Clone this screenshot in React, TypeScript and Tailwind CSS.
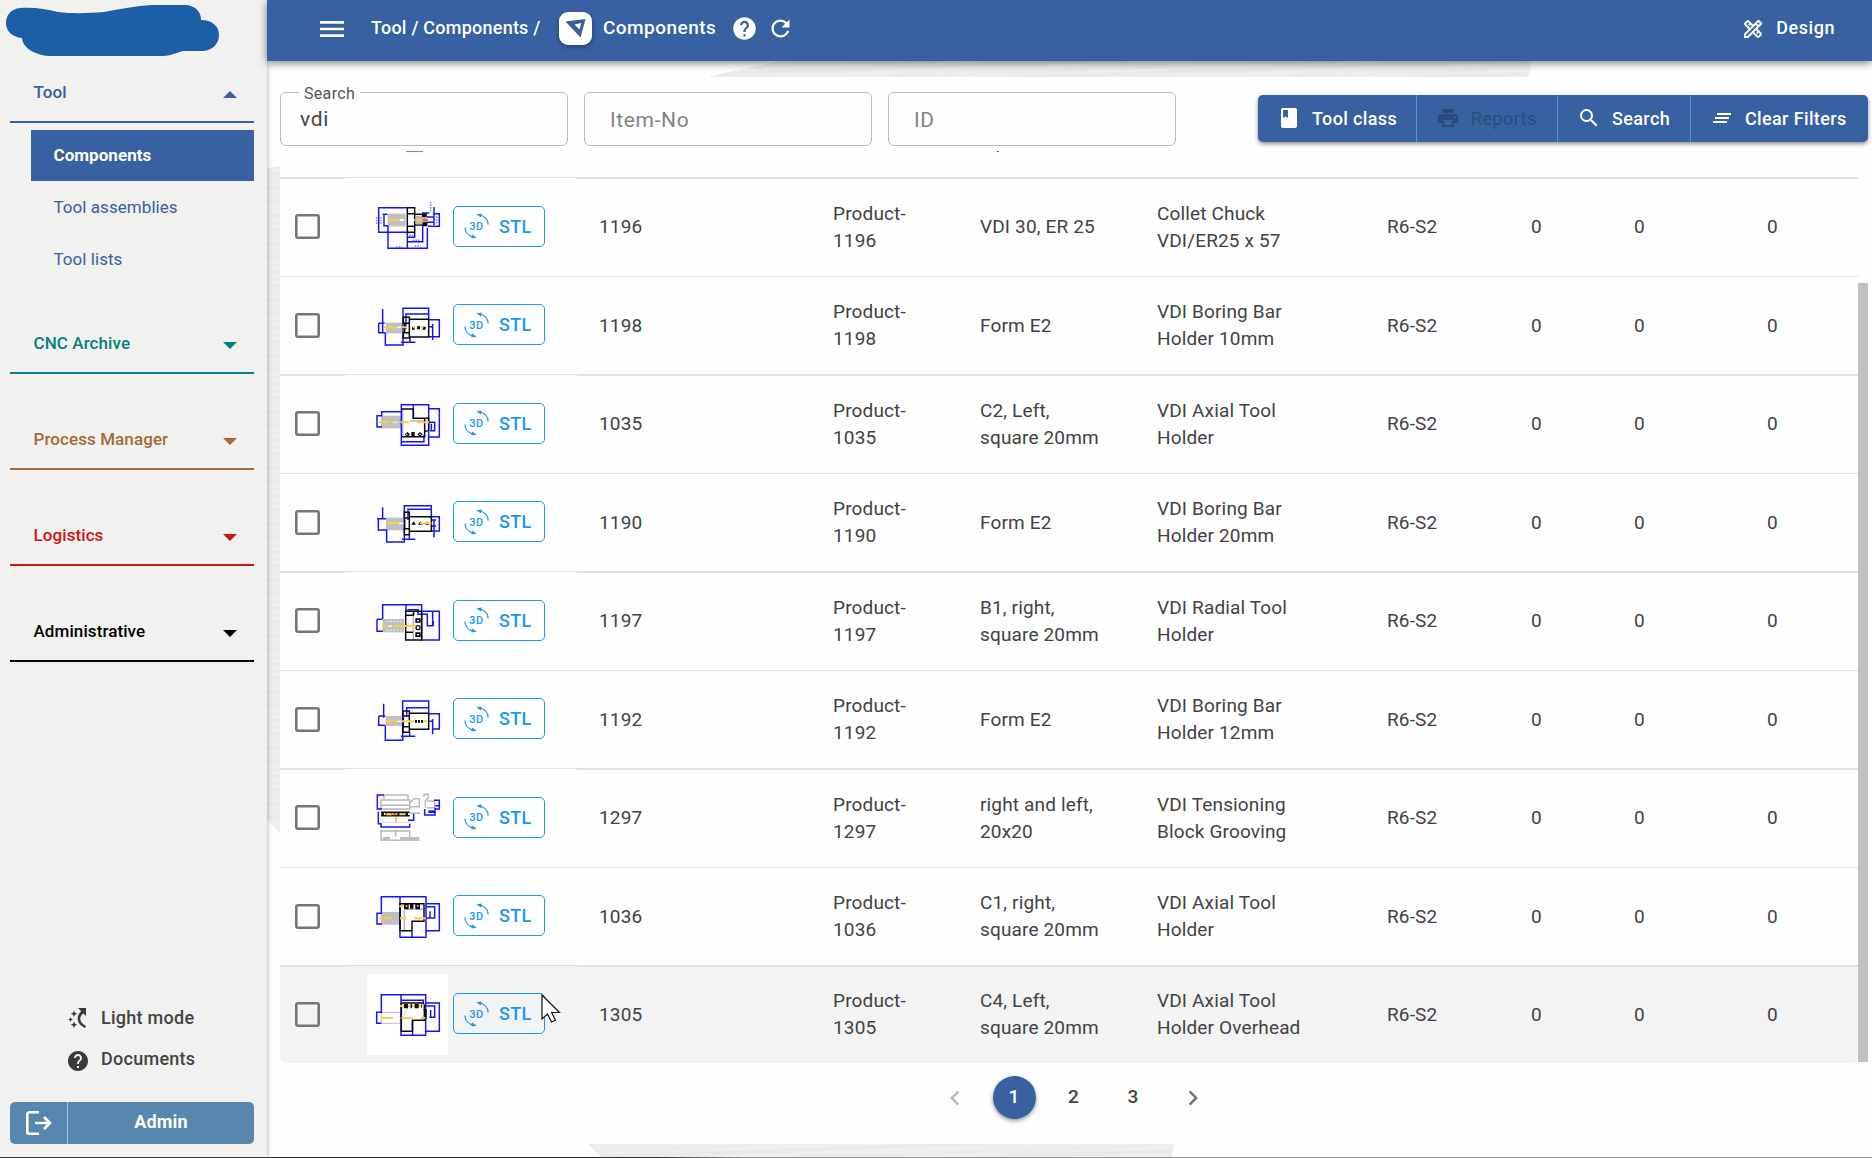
import type { ReactNode } from "react";
import {
  MdMenu,
  MdHelp,
  MdRefresh,
  MdOutlineDesignServices,
  MdBook,
  MdPrint,
  MdSearch,
  MdClearAll,
  MdChevronLeft,
  MdChevronRight,
} from "react-icons/md";

type Row = { id: string; form: ReactNode; desc: ReactNode; box: string; art: ReactNode };

const B = (p: { d: string }) => <path d={p.d} stroke="#1414f5" strokeWidth="4.4" />;
const K = (p: { d: string }) => <path d={p.d} stroke="#0a0a0a" strokeWidth="4.4" />;
const Y = (p: { d: string }) => <path d={p.d} stroke="#fbcf45" strokeWidth="6" />;
const G = (p: { d: string }) => <path d={p.d} fill="#c0c0c0" />;
const S = (p: { d: string }) => <path d={p.d} stroke="#b8b8b8" strokeWidth="4.4" />;
const D = (p: { d: string }) => <path d={p.d} fill="#0a0a0a" />;

const rows: Row[] = [
  {
    id: "1196",
    form: "VDI 30, ER 25",
    desc: <>Collet Chuck<br />VDI/ER25 x 57</>,
    box: "21 18 243 243",
    art: (
      <>
        <G d="M83 98h54v38H83z" />
        <path d="M50 108v22M62 108v20M230 106v22M148 163h12M158 178h22M108 198h18M164 195h18M212 62v32" stroke="#8a8af5" strokeWidth="5" strokeDasharray="5 3" />
        <B d="M142 80H56v74h84M68 100h14M72 100v34h12M84 134v68h58M142 152v50h58M142 182h46V130M202 140v64M164 155v14h-20M222 78v54M200 108h22M200 124h22M222 98h16v38h-34M186 96h22" />
        <K d="M142 80h22v18h-22zM142 136h22v18h-22zM166 100h34M166 132h34M142 98v38M164 98v38" />
        <path d="M168 104h32v26h-32z" fill="#bbb" />
        <D d="M186 98h14v10h-14zM188 124h14v12h-14z" />
        <Y d="M83 117h34M170 117h16" />
        <path d="M188 117h16" stroke="#e8772e" strokeWidth="8" />
        <path d="M120 117h12M144 117h20" stroke="#fff" strokeWidth="6" />
      </>
    ),
  },
  {
    id: "1198",
    form: "Form E2",
    desc: <>VDI Boring Bar<br />Holder 10mm</>,
    box: "21 315 243 243",
    art: (
      <>
        <G d="M77 428h50v32H77z" />
        <B d="M68 387v72M56 430v28h20M56 430h18M76 458v37h53V385h77v35M138 440v-38h68M206 419h32v51h-32M218 432v48M206 440h14M150 470v18M123 487h43" />
        <K d="M148 418h58v53h-58zM130 412h18v18h-18zM130 458h18v16h-18zM134 430v30" />
        <D d="M156 440h8v9h-8zM171 439h9v9h-9zM188 440h9v9h-9zM128 440h12v6h-12z" />
        <Y d="M72 442h38M125 442h16M158 442h6M182 442h8" />
        <path d="M112 442h10" stroke="#fff" strokeWidth="5" />
      </>
    ),
  },
  {
    id: "1035",
    form: <>C2, Left,<br />square 20mm</>,
    desc: <>VDI Axial Tool<br />Holder</>,
    box: "21 9 243 243",
    art: (
      <>
        <G d="M63 104h60v38H63z" />
        <S d="M128 86v80M150 120h50" />
        <B d="M66 138H51v-34h14V92h59V71h82v42M124 92v101h82V83h32v85h-32M160 71v40M206 124h18v25h-14M214 128v18M124 182h68v-20" />
        <K d="M124 84h36v28h34v55h-70M194 112h12v36l-12 4M206 120v30" />
        <D d="M134 160l8-7 8 7-8 8zM154 153h10v14h-10zM172 160l8-7 8 7-8 8z" />
        <path d="M138 160h4M178 160h4" stroke="#fff" strokeWidth="4" />
        <Y d="M57 124h34M122 124h24M171 124h36" />
        <path d="M100 124h16" stroke="#fff" strokeWidth="4" strokeDasharray="5 3" />
      </>
    ),
  },
  {
    id: "1190",
    form: "Form E2",
    desc: <>VDI Boring Bar<br />Holder 20mm</>,
    box: "21 306 243 243",
    art: (
      <>
        <G d="M78 413h55v38H78z" />
        <B d="M68 382v34M78 416H55v34h25v36h53V377h81v34M144 420v-32h70M51 416h10M206 410h32v43h-24M222 422v50M214 420h14M214 438h14M148 462v18M126 478h40" />
        <K d="M148 410h66v44h-66zM133 397h15v17h-15zM133 446h15v18h-15zM134 418v26" />
        <D d="M154 434l7-10 7 10zM174 434l7-10 7 10zM194 434l7-10 7 10z" />
        <Y d="M77 429h36M180 430h34" />
        <path d="M116 430h14" stroke="#fff" strokeWidth="4" />
      </>
    ),
  },
  {
    id: "1197",
    form: <>B1, right,<br />square 20mm</>,
    desc: <>VDI Radial Tool<br />Holder</>,
    box: "21 0 243 243",
    art: (
      <>
        <G d="M68 114h64v40H68z" />
        <path d="M80 121h44M80 148h44" stroke="#eee" strokeWidth="4" strokeDasharray="5 5" />
        <S d="M160 90v88" />
        <B d="M68 114V71h117v106h53V91h-50M138 71v21M51 115h16M51 115v36h18M142 86h32v14h28v34h16V92M220 120v14" />
        <K d="M137 91h48v86h-48zM137 103h24M161 91v12M137 154h22M137 154v22" />
        <D d="M166 112h16v13h-16zM166 154h16v14h-16z" />
        <circle cx="174" cy="140" r="6" stroke="#111" strokeWidth="4" />
        <path d="M171 119h6M171 161h6" stroke="#fff" strokeWidth="4" />
        <Y d="M66 135h12M100 135h68" />
        <path d="M84 135h12" stroke="#fff" strokeWidth="4" />
      </>
    ),
  },
  {
    id: "1192",
    form: "Form E2",
    desc: <>VDI Boring Bar<br />Holder 12mm</>,
    box: "21 297 243 243",
    art: (
      <>
        <G d="M77 408h50v30H77z" />
        <B d="M71 371v42M56 408v28h20M56 408h20M76 438v43h52V363h78v42M140 410v-27h66M206 401h32v46h-22M218 417v46M206 424h14M149 455v14M123 469h43" />
        <K d="M148 400h58v48h-58zM129 393h19v15h-19zM129 440h19v17h-19zM130 412v26" />
        <Y d="M74 424h36M125 424h38M190 424h14" />
        <D d="M165 420h6v8h-6zM174 420h6v8h-6zM183 420h6v8h-6z" />
        <path d="M112 424h12" stroke="#fff" strokeWidth="4" />
      </>
    ),
  },
  {
    id: "1297",
    form: <>right and left,<br />20x20</>,
    desc: <>VDI Tensioning<br />Block Grooving</>,
    box: "21 21 243 243",
    art: (
      <>
        <S d="M72 84V72h72v14M63 87h86v27H63zM63 103h86M150 95l12-12h16v24h-28M150 127h30M192 78v-8h12v12l-8 6v22M200 90h24v20h-24M63 180h86v28H63zM107 176v20M150 208h28" />
        <G d="M68 198h22v12H68zM120 198h58v12h-58z" />
        <path d="M68 140v14h80v-14" stroke="#ccc" strokeWidth="2" />
        <B d="M72 72H52v42h14M55 122v36h8v10h86v-10M144 148h17v-20M194 114v18h31v-22M222 88h16v26h-14M226 104h12" />
        <K d="M63 124h86M63 134h86" />
        <path d="M64 129h84" stroke="#111" strokeWidth="10" strokeDasharray="8 4" />
        <path d="M76 130h34" stroke="#ef8a3a" strokeWidth="5" />
        <Y d="M108 138v18M118 130h16M80 130h14" />
        <path d="M205 122h20" stroke="#1414f0" strokeWidth="8" />
      </>
    ),
  },
  {
    id: "1036",
    form: <>C1, right,<br />square 20mm</>,
    desc: <>VDI Axial Tool<br />Holder</>,
    box: "21 318 243 243",
    art: (
      <>
        <G d="M63 426h57v38H63z" />
        <S d="M133 420v64M140 418h50" />
        <B d="M66 462H51v-32h13v-50h134v122h-78V380M198 401h40v81h-40M198 410h26v34h-26M210 424v20M156 482v20" />
        <K d="M120 401h72v53h-36v28h-36zM192 401v50" />
        <D d="M132 402h14v16h-14zM150 402h10v14h-10zM166 402h14v16h-14z" />
        <path d="M137 408h5M171 408h5" stroke="#fff" strokeWidth="4" />
        <Y d="M57 445h38M120 445h18M163 445h35M118 409h12" />
      </>
    ),
  },
  {
    id: "1305",
    form: <>C4, Left,<br />square 20mm</>,
    desc: <>VDI Axial Tool<br />Holder Overhead</>,
    box: "291 42 243 243",
    art: (
      <>
        <path d="M334 157h57v33h-57z" stroke="#bdbdbd" strokeWidth="3" />
        <path d="M412 145l-14 34" stroke="#ccc" strokeWidth="3" />
        <B d="M334 190h-14v-33h14v-53h133v122h-74V104M394 121h66v12M467 129h41v85h-41M467 138h27v34h-16M482 150v20M428 182v44" />
        <K d="M394 129h66M394 129v85h33v-33h36V133M460 150h8v28" />
        <Y d="M333 174h36M394 174h34M390 138h70M452 174h14" />
        <path d="M402 138h54" stroke="#111" strokeWidth="14" strokeDasharray="12 8 4 8" />
      </>
    ),
  },
];

function StlButton() {
  return (
    <div className="mb-0.5 ml-[5px] flex h-[41px] w-[92px] items-center rounded-[5px] border border-[#2196f3] pl-2.5 text-[18px] font-medium tracking-[0.02em] text-[#2196f3]">
      <svg width="25" height="26" viewBox="0 0 25 26" fill="none" stroke="#2196f3" strokeWidth="1.3">
        <text x="12.4" y="16.800" textAnchor="middle" fontFamily="Roboto, sans-serif" fontSize="11" fontWeight="500" fill="#2196f3" stroke="none">
          3D
        </text>
        <path d="M24.2 11.5C24 6.500 20.500 2.600 15 1.800" />
        <path d="M12.300 1.300l5.400-.9-.8 4.200z" fill="#2196f3" stroke="none" />
        <path d="M.9 14.500C1.100 19.500 4.600 23.400 10 24.200" />
        <path d="M12.800 24.700l-5.400.9.800-4.200z" fill="#2196f3" stroke="none" />
      </svg>
      <span className="ml-[10px]">STL</span>
    </div>
  );
}

function TableRow({ row, index }: { row: Row; index: number }) {
  const thick = index % 2 === 0;
  const last = index === rows.length - 1;
  const cell = `flex items-center ${thick ? "border-t-2 pb-[2px]" : "border-t pb-px"} border-[#e0e0e0]`;
  return (
    <div
      className={`grid grid-cols-[65px_232px_256px_147px_177px_230px_144px_103px_133px_91px] text-[19px] leading-[27px] tracking-[0.008em] text-[#424244] ${
        thick && !last ? "h-[99px]" : "h-[98px]"
      } ${last ? "rounded-b-md bg-[#f3f3f3]" : ""}`}
    >
      <div className={`${cell} pl-[15px]`}>
        <span className="size-[25px] rounded-[3px] border-2 border-[#757575] shadow-[inset_0_0_0_0.6px_#757575]" />
      </div>
      <div className="flex items-center border-t border-[#e0e0e0] pl-[22px]">
        <svg width="81" height="81" viewBox={row.box} fill="none" className={last ? "bg-white" : ""}>
          {row.art}
        </svg>
        <StlButton />
      </div>
      <div className={`${cell} pl-[22px]`}>{row.id}</div>
      <div className={cell}>
        <span>
          Product-
          <br />
          {row.id}
        </span>
      </div>
      <div className={cell}>
        <span>{row.form}</span>
      </div>
      <div className={cell}>
        <span>{row.desc}</span>
      </div>
      <div className={cell}>R6-S2</div>
      <div className={cell}>0</div>
      <div className={cell}>0</div>
      <div className={cell}>0</div>
    </div>
  );
}

function Section({ label, className, up }: { label: string; className: string; up?: boolean }) {
  return (
    <div className={`mr-[13px] ml-[10px] flex h-[62px] items-center justify-between border-b-2 border-current pt-[3px] pr-[17px] pl-[23.5px] text-[17px] font-medium tracking-[0.005em] ${className}`}>
      <span>{label}</span>
      <svg width="14" height="7" viewBox="0 0 14 7" fill="currentColor" className="mt-[3px]">
        <path d={up ? "M0 7L7 0l7 7z" : "M0 0l7 7 7-7z"} />
      </svg>
    </div>
  );
}

function Sidebar() {
  return (
    <aside className="relative z-10 flex w-[267px] shrink-0 flex-col bg-[#f1f1ef] shadow-[1px_0_4px_rgba(0,0,0,0.25)]">
      <svg width="267" height="61" viewBox="0 0 267 61" className="shrink-0">
        <path
          d="M20 8C34 7 46 9 58 12C74 14 90 13 104 12C120 9 136 6 152 5H186C196 6 201 12 201 20C212 20 219 26 219 35C219 44 212 51 202 51H183C175 53 170 56 163 56H49C36 55 23 49 22 38C12 37 6 31 6 23C6 15 11 9 20 8Z"
          fill="#1d5fa6"
        />
      </svg>
      <Section label="Tool" up className="text-[#3761a0]" />
      <nav className="mt-[7px] mr-[13px] ml-[31px] text-[17px] tracking-[0.003em] text-[#3761a0]">
        <div className="flex h-[51px] items-center bg-[#3761a0] pl-[22.5px] font-bold text-white">Components</div>
        <div className="flex h-[52px] items-center pt-px pl-[22.5px]">Tool assemblies</div>
        <div className="flex h-[52px] items-center pt-px pl-[22.5px]">Tool lists</div>
      </nav>
      <div className="mt-[27px] flex flex-col gap-[34px]">
        <Section label="CNC Archive" className="text-[#048080]" />
        <Section label="Process Manager" className="text-[#a5693a]" />
        <Section label="Logistics" className="text-[#cb1515]" />
        <Section label="Administrative" className="text-black" />
      </div>
      <div className="mt-auto text-[18px] font-medium tracking-[0.015em] text-[#424244]">
        <div className="flex h-[41px] items-center pl-[68px]">
          <svg width="20" height="22" viewBox="0 0 20 22" fill="#3a3a3c" className="mr-[13px]">
            <path d="M10 1h8v8l-2.700-2.600C10.800 10 11 15.500 18 19l-1 2C8.500 17 7.500 9.500 13.200 4.200z" />
            <path d="M6 3.500l1 2.200 2.200 1-2.200 1-1 2.200-1-2.200-2.200-1 2.200-1zM6 14.500l1 2.200 2.200 1-2.200 1-1 2.200-1-2.200-2.200-1 2.200-1zM2.500 10l.8 1.700 1.700.8-1.700.8-.8 1.700-.8-1.700L0 12.500l1.700-.8z" />
          </svg>
          Light mode
        </div>
        <div className="flex h-[41px] items-center pl-[66px]">
          <MdHelp className="mt-1 mr-[11px] size-6 text-[#3a3a3c]" />
          Documents
        </div>
      </div>
      <div className="mt-[23px] mr-[13px] mb-3.5 ml-[10px] flex h-[42px] overflow-hidden rounded-[5px] bg-[#5786ae] text-[18px] font-bold tracking-[0.008em] text-white">
        <div className="flex w-[58px] items-center justify-center border-r border-[#90caf9]">
          <svg width="26" height="24" viewBox="0 0 26 24" fill="none" stroke="white" strokeWidth="2.600">
            <path d="M13 1.300H3.300a2 2 0 0 0-2 2v17.400a2 2 0 0 0 2 2H13M9 12h15M18 6l6 6-6 6" />
          </svg>
        </div>
        <div className="flex flex-1 items-center justify-center pb-[3px]">Admin</div>
      </div>
    </aside>
  );
}

function Header() {
  return (
    <header className="relative z-10 flex h-[61px] shrink-0 items-center bg-[#3761a0] pb-1 text-[18px] font-medium tracking-[0.013em] text-white shadow-[0_2px_8px_rgba(0,0,0,0.5)]">
      <MdMenu className="ml-[49px] size-8" />
      <span className="ml-[23px] w-[188px] pb-0.5">Tool / Components /</span>
      <span className="flex size-[33px] items-center justify-center rounded-[9px] bg-white shadow-[0_2px_4px_rgba(0,0,0,0.35)]">
        <svg width="21" height="21" viewBox="0 0 21 21" fillRule="evenodd">
          <path d="M.5 3.500L20.500 1 15.500 19.500zM9.500 6.500l5 5 1.800-6.500z" fill="#3a5f98" />
        </svg>
      </span>
      <span className="ml-[11px] w-[128px] text-[19px] tracking-[0.024em]">Components</span>
      <MdHelp className="size-[27px]" />
      <MdRefresh className="ml-[9px] size-[27px]" />
      <MdOutlineDesignServices className="ml-auto size-6" />
      <span className="mr-[37px] ml-[11px] pb-0.5 tracking-[0.03em]">Design</span>
    </header>
  );
}

function Field({ placeholder, value }: { placeholder: string; value?: string }) {
  return (
    <div className="relative flex h-[54px] w-[288px] items-center rounded-md border border-[#b9b9b9] text-[21px] tracking-[0.03em]">
      {value ? (
        <>
          <span className="absolute -top-[11px] left-[18px] bg-[#fefefe] px-[5px] text-[16px] leading-6 tracking-[0.02em] text-[#555]">{placeholder}</span>
          <span className="pt-[2px] pl-[19px] text-[#444]">{value}</span>
        </>
      ) : (
        <span className="pt-[4px] pl-[25px] text-[#838383]">{placeholder}</span>
      )}
    </div>
  );
}

function Toolbar() {
  const item = "flex items-center pb-px";
  return (
    <div className="flex h-[47px] w-[610px] rounded-[5px] bg-[#3761a0] text-[18px] font-medium tracking-[0.02em] text-white shadow-[0_2px_4px_rgba(0,0,0,0.45)]">
      <div className={`${item} w-[159px] gap-[11px] border-r border-[#4a97e0] pl-[19px]`}>
        <MdBook className="size-6" />
        <span>Tool class</span>
      </div>
      <div className={`${item} w-[141px] gap-[11px] border-r border-[#4a97e0] pl-[19px] font-normal tracking-[0.025em] text-[#2b4a7d]`}>
        <MdPrint className="size-6" />
        <span>Reports</span>
      </div>
      <div className={`${item} w-[133px] gap-[11px] border-r border-[#4a97e0] pl-[19px]`}>
        <MdSearch className="size-6" />
        <span>Search</span>
      </div>
      <div className={`${item} gap-[11px] pl-[19px]`}>
        <MdClearAll className="size-6" />
        <span>Clear Filters</span>
      </div>
    </div>
  );
}

function Pagination() {
  return (
    <div className="mt-[13px] ml-[653px] flex h-[43px] items-center gap-[16.500px] text-[19px] font-medium text-[#424244]">
      <span className="flex size-[43px] items-center justify-center text-[#b9b9b9]">
        <MdChevronLeft className="size-[30px]" />
      </span>
      <span className="flex size-[43px] items-center justify-center rounded-full bg-[#3761a0] text-white shadow-[0_2px_4px_rgba(0,0,0,0.4)]">1</span>
      <span className="flex size-[43px] items-center justify-center">2</span>
      <span className="flex size-[43px] items-center justify-center">3</span>
      <span className="flex size-[43px] items-center justify-center text-[#757575]">
        <MdChevronRight className="size-[30px]" />
      </span>
    </div>
  );
}

export default function App() {
  return (
    <div className="relative flex h-[1158px] w-[1872px] overflow-hidden bg-[#fefefe] font-[Roboto,sans-serif]">
      <Sidebar />
      <main className="relative flex min-w-0 flex-1 flex-col">
        <div className="absolute inset-0 bg-[repeating-linear-gradient(178deg,#ebebea_0px,#f0f0ef_3px,#e8e8e7_5px,#efefee_9px,#ececeb_14px)] [clip-path:polygon(513px_61px,1265px_61px,1261px_77px,907px_1144px,905px_1157px,334px_1157px,321px_1144px,0px_820px,0px_168px,13px_166px,440px_77px)]" />
        <Header />
        <section className="relative mt-4 ml-[13px] flex h-[1067px] w-[1588px] flex-col rounded-md bg-[#fefefe]">
          <div className="flex h-[73px] pt-[15px]">
            <div className="flex gap-4">
              <Field placeholder="Search" value="vdi" />
              <Field placeholder="Item-No" />
              <Field placeholder="ID" />
            </div>
            <div className="mt-[3px] ml-auto">
              <Toolbar />
            </div>
          </div>
          <div className="flex h-[27px]">
            <span className="mt-px ml-[126px] h-px w-[17px] bg-[#7a7af5]" />
            <span className="mt-px ml-[574px] h-px w-0.5 bg-[#555]" />
          </div>
          <div className="flex">
            <div className="w-[1578px]">
              {rows.map((row, i) => (
                <TableRow key={row.id} row={row} index={i} />
              ))}
            </div>
            <div className="mt-[106px] h-[779px] w-2.5 bg-[#c1c1c1]" />
          </div>
          <Pagination />
        </section>
        <svg width="20" height="29" viewBox="0 0 20 29" className="absolute top-[994px] left-[274px]">
          <path d="M1 1v24l5.500-5 4 8 4-1.800-3.800-7.700H18.500z" fill="white" stroke="#111" strokeWidth="1.200" />
        </svg>
      </main>
      <div className="absolute bottom-0 left-0 z-20 h-px w-full bg-linear-to-r from-[#333] from-35% to-[#999] to-40%" />
    </div>
  );
}
